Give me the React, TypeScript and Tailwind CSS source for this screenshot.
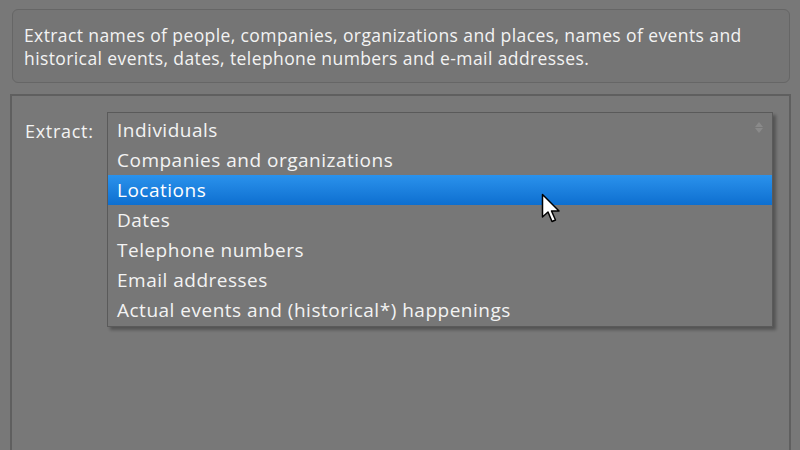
import React from "react"

const options = [
  "Individuals",
  "Companies and organizations",
  "Locations",
  "Dates",
  "Telephone numbers",
  "Email addresses",
  "Actual events and (historical*) happenings",
]

function Cursor() {
  return (
    <svg className="absolute left-[541px] top-[193px]" width="22" height="32" viewBox="0 0 22 32">
      <path
        d="M1.5 1.5 L1.5 24 L7 19 L11 28.5 L14.5 27 L10.5 18 L18 18 Z"
        fill="#ffffff"
        stroke="#000000"
        strokeWidth="1.5"
        strokeLinejoin="round"
      />
    </svg>
  )
}

export default function App() {
  return (
    <div
      className="relative h-[450px] w-[800px] overflow-hidden bg-[#787878] text-[#f3f3f3]"
      style={{ fontFamily: '"Open Sans", "DejaVu Sans", sans-serif' }}
    >
      <div className="ml-[12px] mr-[10px] mt-[9px] h-[74px] rounded-[6px] border border-[#666666] bg-[#757575] px-[11px] pt-[14px] text-[17.5px] leading-[23px] tracking-[0.4px]">
        Extract names of people, companies, organizations and places, names of events and historical events, dates, telephone numbers and e-mail addresses.
      </div>

      <div className="ml-[10px] mr-[9px] mt-[11px] h-[400px] border-l-2 border-r-2 border-t-2 border-[#5f5f5f] pl-[13px] pt-[16px]">
        <div className="flex items-start">
          <div className="w-[82px] pt-[8px] text-[18px] leading-[22px] tracking-[0.7px]">Extract:</div>
          <div className="relative w-[666px] border border-[#5a5a5a] bg-[#777777] pb-[1px] pt-[2px] shadow-[3px_3px_3px_rgba(0,0,0,0.3)]">
            {options.map((o, i) => (
              <div
                key={o}
                className={
                  i === 2
                    ? "h-[30px] bg-gradient-to-b from-[#2a92ec] to-[#0d6fd0] pl-[9px] text-[19px] leading-[30px] tracking-[0.5px] text-white"
                    : "h-[30px] pl-[9px] text-[19px] leading-[30px] tracking-[0.5px]"
                }
              >
                {o}
              </div>
            ))}
            <div className="absolute right-[9px] top-[9px] flex flex-col items-center gap-[1px] text-[#8a8a8a]">
              <svg width="8" height="5" viewBox="0 0 8 5">
                <path d="M0 5 L4 0 L8 5 Z" fill="currentColor" />
              </svg>
              <svg width="8" height="5" viewBox="0 0 8 5">
                <path d="M0 0 L4 5 L8 0 Z" fill="currentColor" />
              </svg>
            </div>
          </div>
        </div>
      </div>

      <Cursor />
    </div>
  )
}
